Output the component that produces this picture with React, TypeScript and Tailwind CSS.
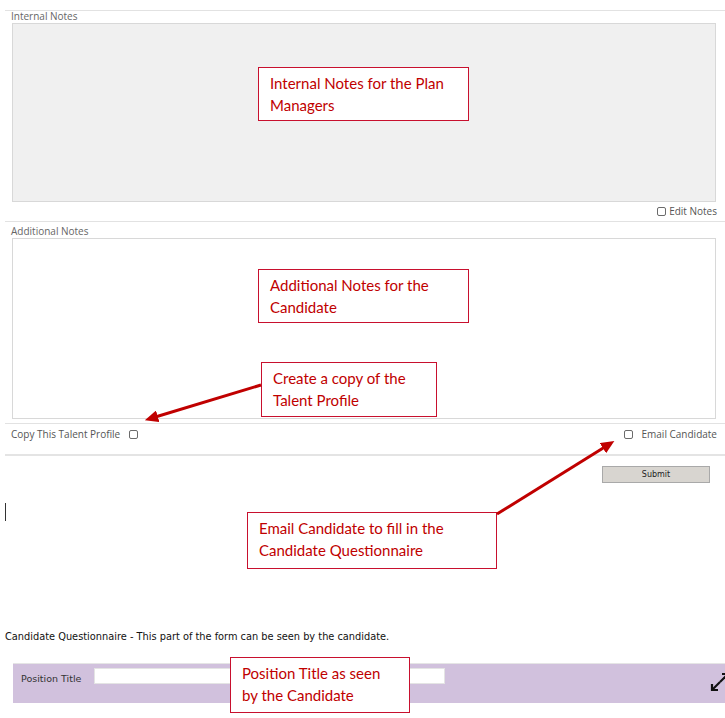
import * as React from "react";

/* Annotated form screenshot: internal/additional notes, copy + email toggles,
   and the candidate questionnaire strip. Red callouts sit on top. */

function Box() {
  return <span className="inline-block h-[9px] w-[9px] rounded-[2px] border border-[#6b6b6b] bg-white" />;
}

function Callout({ className, lines }: { className: string; lines: string[] }) {
  return (
    <div
      className={
        "absolute z-10 border border-[#c8102e] bg-white px-[11px] pt-[4px] font-['Lato',sans-serif] text-[15px] leading-[22px] text-[#c00000] " +
        className
      }
    >
      {lines.map((l) => (
        <div key={l}>{l}</div>
      ))}
    </div>
  );
}

export default function App() {
  return (
    <div className="relative h-[718px] w-[725px] overflow-hidden bg-white font-['Open_Sans',sans-serif] text-[#555]">
      {/* ─── Internal notes ─── */}
      <div className="pt-[10px]">
        <div className="ml-[5px] border-t border-[#e2e2e2]" />
        <div className="pl-[11px] text-[10px] leading-[11px] text-[#666]">Internal Notes</div>
        <div className="ml-[12px] mt-[1px] h-[179px] w-[704px] border border-[#d8d8d8] bg-[#f0f0f0]" />
        <div className="flex h-[19px] items-center justify-end gap-[3px] pr-[8px] text-[10px]">
          <Box />
          <span>Edit Notes</span>
        </div>
      </div>

      {/* ─── Additional notes ─── */}
      <div>
        <div className="ml-[5px] border-t border-[#e2e2e2]" />
        <div className="pl-[11px] pt-[4px] text-[10px] leading-[11px] text-[#666]">Additional Notes</div>
        <div className="ml-[12px] mt-[1px] h-[181px] w-[704px] border border-[#d8d8d8] bg-white" />
        <div className="mt-[4px] ml-[5px] border-t border-[#e2e2e2]" />
        <div className="flex h-[21px] items-center justify-between pl-[11px] pr-[8px] text-[10px]">
          <div className="flex items-center gap-[9px]">
            <span>Copy This Talent Profile</span>
            <Box />
          </div>
          <div className="flex items-center gap-[8px]">
            <Box />
            <span>Email Candidate</span>
          </div>
        </div>
        <div className="mt-[9px] ml-[5px] border-t-2 border-[#e4e4e4]" />
      </div>

      {/* ─── Submit ─── */}
      <div className="flex justify-end pr-[15px] pt-[10px]">
        <button className="h-[17px] w-[108px] border border-[#a9a9a9] bg-[#d8d5d0] font-['DejaVu_Sans',sans-serif] text-[8px] text-[#222]">
          Submit
        </button>
      </div>

      <div className="ml-[5px] mt-[20px] h-[18px] w-px bg-[#333]" />

      {/* ─── Candidate questionnaire ─── */}
      <div className="pl-[5px] pt-[110px] font-['DejaVu_Sans',sans-serif] text-[9.8px] leading-[12px] text-[#111]">
        Candidate Questionnaire - This part of the form can be seen by the candidate.
      </div>
      <div className="ml-[13px] mt-[20px] flex h-[40px] items-start border-t border-[#e5e5e5] bg-[#d1c1dd] pt-[4px]">
        <span className="w-[81px] pl-[8px] pt-[4px] font-['DejaVu_Sans',sans-serif] text-[9.5px] text-[#333]">Position Title</span>
        <div className="h-[16px] w-[351px] border border-[#e4e4e4] bg-white" />
        <svg className="ml-auto mr-[-4px] mt-[5px]" width="20" height="20" viewBox="0 0 20 20" fill="none" stroke="#111" strokeWidth="2.2">
          <path d="M11 9 L3 17" />
          <path d="M3 11 V17 H9" />
          <path d="M11 9 L19 1" />
          <path d="M13 1 H19 V7" />
        </svg>
      </div>

      {/* ─── Annotations ─── */}
      <Callout className="left-[258px] top-[67px] h-[54px] w-[211px]" lines={["Internal Notes for the Plan", "Managers"]} />
      <Callout className="left-[258px] top-[269px] h-[54px] w-[211px]" lines={["Additional Notes for the", "Candidate"]} />
      <Callout className="left-[261px] top-[362px] h-[55px] w-[176px]" lines={["Create a copy of the", "Talent Profile"]} />
      <Callout className="left-[247px] top-[512px] h-[57px] w-[250px]" lines={["Email Candidate to fill in the", "Candidate Questionnaire"]} />
      <Callout className="left-[230px] top-[657px] h-[56px] w-[180px]" lines={["Position Title as seen", "by the Candidate"]} />

      <svg className="pointer-events-none absolute inset-0 z-20" width="725" height="718">
        <defs>
          <marker id="ah" markerWidth="4.5" markerHeight="4" refX="2" refY="2" orient="auto" markerUnits="strokeWidth">
            <path d="M0,0 L4.5,2 L0,4 z" fill="#c00000" />
          </marker>
        </defs>
        <line x1="261" y1="385" x2="152" y2="418" stroke="#c00000" strokeWidth="3" markerEnd="url(#ah)" />
        <line x1="497" y1="514" x2="608" y2="445" stroke="#c00000" strokeWidth="3" markerEnd="url(#ah)" />
      </svg>
    </div>
  );
}
